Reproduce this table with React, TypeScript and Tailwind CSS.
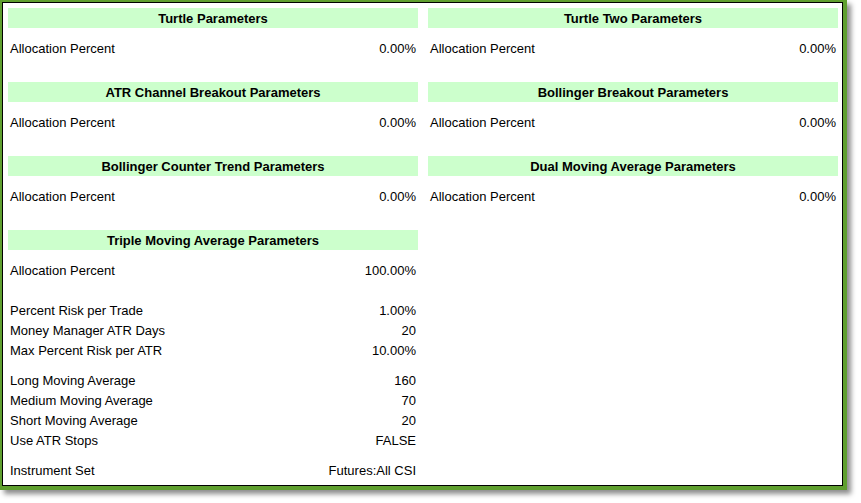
import * as React from "react";

/** 单个参数行 */
type Row = { label: string; value: string };

/** 简单策略区块：只有分配比例 */
const SIMPLE_SECTIONS: { title: string; rows: Row[] }[] = [
  { title: "Turtle Parameters", rows: [{ label: "Allocation Percent", value: "0.00%" }] },
  { title: "Turtle Two Parameters", rows: [{ label: "Allocation Percent", value: "0.00%" }] },
  { title: "ATR Channel Breakout Parameters", rows: [{ label: "Allocation Percent", value: "0.00%" }] },
  { title: "Bollinger Breakout Parameters", rows: [{ label: "Allocation Percent", value: "0.00%" }] },
  { title: "Bollinger Counter Trend Parameters", rows: [{ label: "Allocation Percent", value: "0.00%" }] },
  { title: "Dual Moving Average Parameters", rows: [{ label: "Allocation Percent", value: "0.00%" }] },
];

/** Triple Moving Average 分组（组间留空） */
const TRIPLE_GROUPS: { gap: string; rows: Row[] }[] = [
  { gap: "mt-[10px]", rows: [{ label: "Allocation Percent", value: "100.00%" }] },
  {
    gap: "mt-[20px]",
    rows: [
      { label: "Percent Risk per Trade", value: "1.00%" },
      { label: "Money Manager ATR Days", value: "20" },
      { label: "Max Percent Risk per ATR", value: "10.00%" },
    ],
  },
  {
    gap: "mt-[10px]",
    rows: [
      { label: "Long Moving Average", value: "160" },
      { label: "Medium Moving Average", value: "70" },
      { label: "Short Moving Average", value: "20" },
      { label: "Use ATR Stops", value: "FALSE" },
    ],
  },
  { gap: "mt-[10px]", rows: [{ label: "Instrument Set", value: "Futures:All CSI" }] },
];

function Header({ title }: { title: string }) {
  return (
    <div className="flex h-[20px] items-center justify-center bg-[#ccffcc] pt-px text-[13px] font-bold text-black">
      {title}
    </div>
  );
}

function ParamRow({ row }: { row: Row }) {
  return (
    <div className="flex h-[20px] items-center justify-between px-[2px] pt-[2px] text-[13px] text-black">
      <span>{row.label}</span>
      <span>{row.value}</span>
    </div>
  );
}

export default function App() {
  return (
    <div
      className="h-[503px] w-[861px] bg-white"
      style={{ fontFamily: '"Liberation Sans", Arial, sans-serif' }}
    >
      {/* 绿色外框 + 阴影 */}
      <div className="flex h-[490px] w-[847px] border-b-4 border-l-2 border-r-4 border-t-2 border-[#5f9f2f] shadow-[4px_4px_5px_rgba(0,0,0,0.45)]">
        <div className="flex-1 border border-black bg-white pl-[5px] pr-[3px] pt-[5px]">
          <div className="grid grid-cols-[410px_410px] gap-x-[10px]">
            {SIMPLE_SECTIONS.map((section) => (
              <div key={section.title} className="h-[74px]">
                <Header title={section.title} />
                <div className="mt-[10px]">
                  {section.rows.map((row) => (
                    <ParamRow key={row.label} row={row} />
                  ))}
                </div>
              </div>
            ))}

            {/* Triple Moving Average */}
            <div>
              <Header title="Triple Moving Average Parameters" />
              {TRIPLE_GROUPS.map((group, i) => (
                <div key={i} className={group.gap}>
                  {group.rows.map((row) => (
                    <ParamRow key={row.label} row={row} />
                  ))}
                </div>
              ))}
            </div>
          </div>
        </div>
      </div>
    </div>
  );
}
